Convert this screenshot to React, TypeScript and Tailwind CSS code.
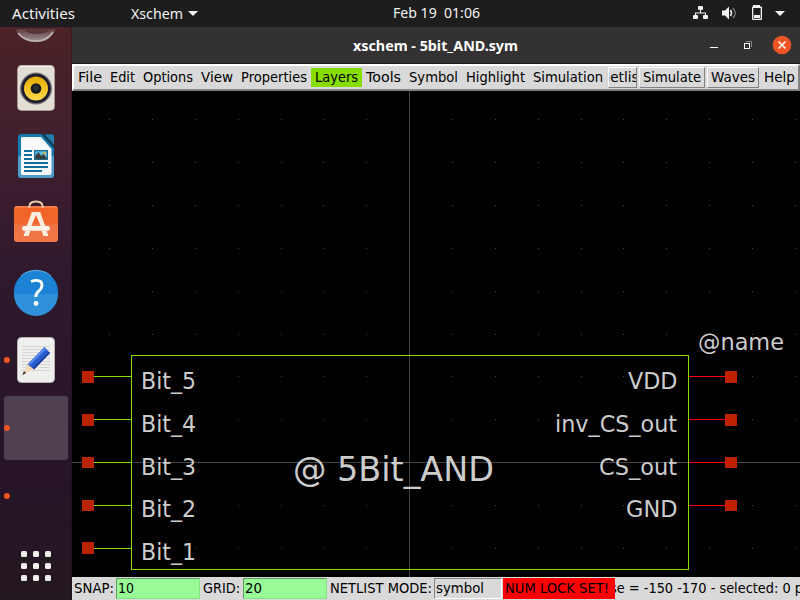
import React from "react";

const STEP = 42.87;
const MENU_FONT = "font-['DejaVu_Sans',sans-serif] text-[13.33px] text-black";

const menus = [
  { label: "File", cls: "w-[32px] pl-[4px]", w: 24 },
  { label: "Edit", cls: "w-[33px] pl-[4px]", w: 25 },
  { label: "Options", cls: "w-[58px] pl-[4px]", w: 50 },
  { label: "View", cls: "w-[40px] pl-[4px]", w: 32 },
  { label: "Properties", cls: "w-[74px] pl-[4px]", w: 66 },
  { label: "Layers", cls: "w-[51px] pl-[4px] bg-[#88dd00]", w: 43 },
  { label: "Tools", cls: "w-[43px] pl-[4px]", w: 35 },
  { label: "Symbol", cls: "w-[57px] pl-[4px]", w: 49 },
  { label: "Highlight", cls: "w-[67px] pl-[4px]", w: 59 },
  { label: "Simulation", cls: "w-[79px] pl-[4px]", w: 70 },
];

// Single text line scaled to an exact run length
function Label({ text, w, color = "#000", y = 14 }: { text: string; w: number; color?: string; y?: number }) {
  return (
    <svg width={w + 2} height="19" className="block shrink-0 overflow-visible">
      <text x="0" y={y} textLength={w} lengthAdjust="spacingAndGlyphs" fill={color} className="whitespace-pre">{text}</text>
    </svg>
  );
}

function TopBar() {
  return (
    <div className="flex h-[27px] w-full shrink-0 items-center bg-[#1d1d1d] text-[#f2f2f2] font-['Noto_Sans','Open_Sans',sans-serif] text-[13.5px]">
      <div className="w-[131px] pl-3"><Label text="Activities" w={63} color="#f2f2f2" y={14.5} /></div>
      <div className="flex w-[262px] items-center">
        <Label text="Xschem" w={52} color="#f2f2f2" y={14.5} />
        <svg width="10" height="5" className="ml-[3px]"><path d="M0 0h10L5 5z" fill="#f2f2f2" /></svg>
      </div>
      <div className="w-[300px]"><Label text="Feb 19  01:06" w={87} color="#f2f2f2" /></div>
      <svg width="107" height="27" viewBox="693 0 107 27">
        <g fill="#f2f2f2">
          <rect x="698" y="6" width="5" height="4" rx="1" />
          <rect x="693" y="15" width="5" height="4" rx="1" />
          <rect x="703" y="15" width="5" height="4" rx="1" />
          <path d="M700 10h1v2.500h5V15h-1v-1.500h-9V15h-1v-2.500h5z" />
          <path d="M722 10.500h3l4-4v13l-4-4h-3z" />
          <path d="M753 5h7v1.500h1.200q.8 0 .8.800V19q0 1-1 1h-8q-1 0-1-1V7.300q0-.8.8-.8h.2zM753.300 8v10.700h7.400V8z" fillRule="evenodd" />
          <rect x="754" y="15" width="6" height="3" />
          <path d="M775 11h10l-5 5z" />
        </g>
        <path d="M730.500 10q2 3 0 6" fill="none" stroke="#f2f2f2" strokeWidth="1.5" />
        <path d="M733 8q4.500 5 0 10" fill="none" stroke="#777" strokeWidth="1.3" />
      </svg>
    </div>
  );
}

function Dock() {
  return (
    <svg width="72" height="573" viewBox="0 27 72 573" className="shrink-0">
      <defs>
        <linearGradient id="dock" x1="0" y1="0" x2="0" y2="1">
          <stop offset="0" stopColor="#4b2226" />
          <stop offset=".2" stopColor="#41202f" />
          <stop offset=".42" stopColor="#30192d" />
          <stop offset=".76" stopColor="#271428" />
          <stop offset="1" stopColor="#241820" />
        </linearGradient>
        <linearGradient id="disc" x1="0" y1="0" x2="0" y2="1"><stop stopColor="#5c3c40" /><stop offset="1" stopColor="#a39496" /></linearGradient>
        <linearGradient id="orange" x1="0" y1="0" x2="0" y2="1"><stop stopColor="#f16425" /><stop offset="1" stopColor="#ee6a37" /></linearGradient>
        <linearGradient id="yellow" x1="0" y1="0" x2="0" y2="1"><stop stopColor="#e5ac00" /><stop offset="1" stopColor="#ffd84c" /></linearGradient>
      </defs>
      <rect y="27" width="72" height="573" fill="url(#dock)" />
      <path d="M71.500 27v573" stroke="#000" strokeOpacity=".2" />
      <path d="M15.500 29q6 13 20.500 13t20-13z" fill="url(#disc)" />
      <path d="M24 30q5 4 12 4 9 0 14-4z" fill="#55373b" />
      <path d="M18 33q6 8 18 8 11 0 17-9" fill="none" stroke="#c0b4b4" strokeWidth="1.5" />

      <rect x="17.500" y="65.500" width="37" height="45" rx="4" fill="#e3ded4" stroke="#ada59e" strokeWidth=".7" />
      <path d="M20 66.200h32" stroke="#f8f7f4" />
      <circle cx="36" cy="88.500" r="16" fill="#777779" />
      <circle cx="36" cy="88.500" r="14.700" fill="#1c1d2c" />
      <circle cx="36" cy="88.500" r="12" fill="url(#yellow)" />
      <circle cx="36" cy="88.500" r="5.300" fill="#161b20" />
      <circle cx="36" cy="88" r="2.800" fill="#2b3034" />

      <path d="M21 134h23l10 14v27q0 3-3 3H21q-3 0-3-3v-38q0-3 3-3z" fill="#1679ad" />
      <path d="M18 156h36v19q0 3-3 3H21q-3 0-3-3z" fill="#4d9dca" />
      <path d="M22 137h19l10.500 12v24q0 2-2 2H23q-2 0-2-2v-35z" fill="#f7f8f9" />
      <path d="M41 134h13v14.500z" fill="#143f5a" />
      <path d="M45 134.500h7q2 0 2 2v8z" fill="#247ead" />
      <path d="M24 151h8M24 155h8M24 159h8M24 163h24M24 167h24M24 171h18" stroke="#146e9f" strokeWidth="2" />
      <rect x="34" y="150" width="14" height="10" fill="#176c98" />
      <rect x="35.300" y="151.300" width="11.400" height="7.400" fill="#63b9df" />
      <path d="M35.300 159v-3l3-4 3 4 2-2 3.400 4v1z" fill="#3b3d3b" />
      <circle cx="44.500" cy="153" r="1.200" fill="#edb62b" />

      <path d="M29.300 210v-3q0-5.500 6.700-5.500t6.700 5.500v3" fill="none" stroke="#ecd2b0" strokeWidth="1.800" />
      <rect x="14" y="206" width="44" height="36" rx="3" fill="url(#orange)" />
      <path d="M15 207h42" stroke="#ff9664" />
      <path d="M14 224h44v15q0 3-3 3H17q-3 0-3-3z" fill="#fff" opacity=".09" />
      <path d="M29.300 206v2M42.700 206v2" stroke="#ecd2b0" strokeWidth="1.800" />
      <path d="M31.800 212h8.400l5 14h-4.500L36 215l-4.700 11h-4.500zM25.500 230.500h5l-2 5.500h-5zM41.500 230.500h5l2 5.500h-5z" fill="#fbece0" />
      <rect x="22" y="226" width="28" height="4.800" rx="2.200" fill="#fff3eb" />

      <circle cx="36" cy="292" r="22" fill="#1b82d5" stroke="#12649a" strokeWidth=".6" />
      <path d="M14 294a22 22 0 0 0 44 0z" fill="#2f90da" />
      <path d="M21 276q6-5.500 15-5.500t15 5.500" fill="none" stroke="#7ebdea" strokeWidth=".8" />
      <path d="M31 281.500q3-1.200 5.500-1.200 5.500 0 5.500 5 0 3-3 5.500-3.300 2.500-3.300 6.200" fill="none" stroke="#fff" strokeWidth="2.800" />
      <circle cx="36" cy="303.500" r="2.400" fill="#fff" />

      <rect x="17.500" y="337.500" width="37" height="45" rx="4" fill="#efefed" stroke="#c2bdbb" strokeWidth=".8" />
      <path d="M22 346.500h28M22 349.500h28M22 352.500h28M22 355.500h28M22 358.500h28M22 361.500h28M22 364.500h28M22 367.500h28M22 370.500h28" stroke="#cfcfcf" strokeWidth=".8" />
      <path d="M44.500 347l5.500 6-16 16.500-6.500-5z" fill="#2c5bce" />
      <path d="M44.500 347l2 2-17.500 17-1.500-1.500z" fill="#5586ed" />
      <path d="M49 352l1 1-16 16.500-1.500-1.500z" fill="#173fa0" />
      <path d="M27.500 364.500l6.500 5-11.500 5.500z" fill="#f3d8b8" />
      <path d="M24 371l2 2-3.700 2.200z" fill="#333" />

      <rect x="4" y="396" width="64" height="64" rx="3" fill="#504150" />
      {[360, 428, 496].map((y) => <circle key={y} cx="6.900" cy={y} r="3" fill="#f05423" />)}
      {[551, 563, 575].map((y) => [21, 33, 45].map((x) => (
        <rect key={`${x}-${y}`} x={x} y={y} width="6" height="6" rx="1.500" fill="#f0eeec" />
      )))}
    </svg>
  );
}

function TitleBar() {
  return (
    <div className="flex h-[37px] shrink-0 border-b border-[#191919] bg-[#333132] font-['Noto_Sans','Open_Sans',sans-serif] text-[13.5px] font-bold">
      <div className="w-[628px] pl-[281px] pt-[9px]"><Label text="xschem - 5bit_AND.sym" w={165} color="#fff" y={14.5} /></div>
      <svg width="100" height="36" viewBox="700 27 100 36">
        <path d="M710 47.500h8" stroke="#fff" />
        <path d="M746 41.500h5.500v5.500" fill="none" stroke="#858384" />
        <rect x="744.500" y="43.500" width="5" height="5" fill="none" stroke="#fff" />
        <circle cx="782" cy="45" r="9.300" fill="#ed5423" />
        <path d="M778.500 41.500l7 7M785.500 41.500l-7 7" stroke="#fff" strokeWidth="1.500" />
      </svg>
    </div>
  );
}

function MenuBar() {
  const raised = "box-border flex h-[21px] items-center overflow-hidden border border-t-white border-l-white border-b-[#828282] border-r-[#828282]";
  return (
    <div className={`flex h-[27px] shrink-0 items-center border-y-2 border-l-2 border-r-2 border-t-white border-l-white border-b-[#828282] border-r-[#828282] bg-[#d9d9d9] ${MENU_FONT}`}>
      {menus.map((m) => (
        <div key={m.label} className={`-mt-px flex h-[19px] shrink-0 items-center ${m.cls}`}><Label text={m.label} w={m.w} /></div>
      ))}
      <div className={`${raised} w-[29px] shrink-0 justify-center`}><Label text="Netlist" w={44} /></div>
      <div className={`${raised} ml-[2px] w-[66px] shrink-0 pl-[3px]`}><Label text="Simulate" w={58} /></div>
      <div className={`${raised} ml-[2px] w-[52px] shrink-0 pl-[3px]`}><Label text="Waves" w={44} /></div>
      <div className="-mt-px pl-[5px]"><Label text="Help" w={31} /></div>
    </div>
  );
}

const texts = [
  { t: "Bit_5", x: 141, y: 388.7, w: 55 },
  { t: "Bit_4", x: 141, y: 431.7, w: 55 },
  { t: "Bit_3", x: 141, y: 474.7, w: 55 },
  { t: "Bit_2", x: 141, y: 516.7, w: 55 },
  { t: "Bit_1", x: 141, y: 559.7, w: 55 },
  { t: "VDD", x: 628, y: 388.7, w: 49.5 },
  { t: "inv_CS_out", x: 555, y: 431.7, w: 122 },
  { t: "CS_out", x: 599, y: 474.7, w: 78 },
  { t: "GND", x: 626, y: 516.7, w: 51.5 },
  { t: "@name", x: 698, y: 349.7, w: 86 },
];

function Schematic() {
  const dots: React.ReactNode[] = [];
  for (const y of [119, 162, 205, 248, 291, 334, 376, 419, 505, 548]) {
    for (let c = -7; c <= 9; c++) {
      if (c === 0) continue;
      dots.push(<rect key={`${y},${c}`} x={Math.round(409.13 + c * STEP)} y={y} width="1" height="1" fill="#484848" />);
    }
  }
  return (
    <svg width="728" height="486" viewBox="72 91 728 486" className="shrink-0 bg-black font-['DejaVu_Sans',sans-serif]">
      {dots}
      <path d="M409.500 91v486M72 462.500h728" stroke="#444" />
      <g fill="#ccc" fontSize="23">
        {texts.map((l) => <text key={l.t} x={l.x} y={l.y} textLength={l.w} lengthAdjust="spacingAndGlyphs">{l.t}</text>)}
        <text x="293" y="481" fontSize="34" textLength="201" lengthAdjust="spacingAndGlyphs">@ 5Bit_AND</text>
      </g>
      <rect x="131.500" y="355.500" width="557" height="214" fill="none" stroke="#88dd00" />
      {[371, 414, 457, 500, 542].map((y, i) => (
        <g key={y}>
          <rect x="82" y={y} width="12" height={i === 2 || i === 3 ? 11 : 12} fill="#bb2200" />
          <path d={`M94 ${[376.5, 419.5, 462.5, 505.5, 548.5][i]}h37`} stroke="#88dd00" />
        </g>
      ))}
      {[371, 414, 457, 500].map((y, i) => (
        <g key={y}>
          <rect x="725" y={y} width="12" height={i < 2 ? 12 : 11} fill="#bb2200" />
          <path d={`M689 ${[376.5, 419.5, 462.5, 505.5][i]}h43`} stroke="#f00" />
        </g>
      ))}
    </svg>
  );
}

function StatusBar() {
  const entry = "box-border h-[21px] shrink-0 border border-t-[#5f9b5e] border-l-[#5f9b5e] border-b-[#83e582] border-r-[#83e582] bg-[#98fb98] pl-[1px]";
  return (
    <div className={`flex h-[23px] shrink-0 items-center overflow-hidden bg-[#d9d9d9] ${MENU_FONT}`}>
      <div className="w-[44px] shrink-0 pl-[2px]"><Label text="SNAP:" w={40} /></div>
      <div className={`${entry} w-[84px]`}><Label text="10" w={16} /></div>
      <div className="w-[43px] shrink-0 pl-[3px]"><Label text="GRID:" w={37} /></div>
      <div className={`${entry} w-[84px]`}><Label text="20" w={17} /></div>
      <div className="w-[107px] shrink-0 pl-[3px]"><Label text="NETLIST MODE:" w={102} /></div>
      <div className="box-border h-[21px] w-[68px] shrink-0 border border-t-[#828282] border-l-[#828282] border-b-white border-r-white pl-px"><Label text="symbol" w={48} /></div>
      <div className="ml-px flex h-[21px] w-[112px] shrink-0 items-center bg-[#ff0000] pl-[2px]"><Label text="NUM LOCK SET!" w={104} /></div>
      <div className="w-[185px] shrink-0 overflow-hidden"><div className="-ml-[5px]"><Label text="se = -150 -170 - selected: 0 p" w={193} /></div></div>
    </div>
  );
}

export default function App() {
  return (
    <div className="flex h-[600px] w-[800px] flex-col overflow-hidden bg-black">
      <TopBar />
      <div className="flex h-[573px]">
        <Dock />
        <div className="flex w-[728px] flex-col">
          <TitleBar />
          <MenuBar />
          <Schematic />
          <StatusBar />
        </div>
      </div>
    </div>
  );
}
